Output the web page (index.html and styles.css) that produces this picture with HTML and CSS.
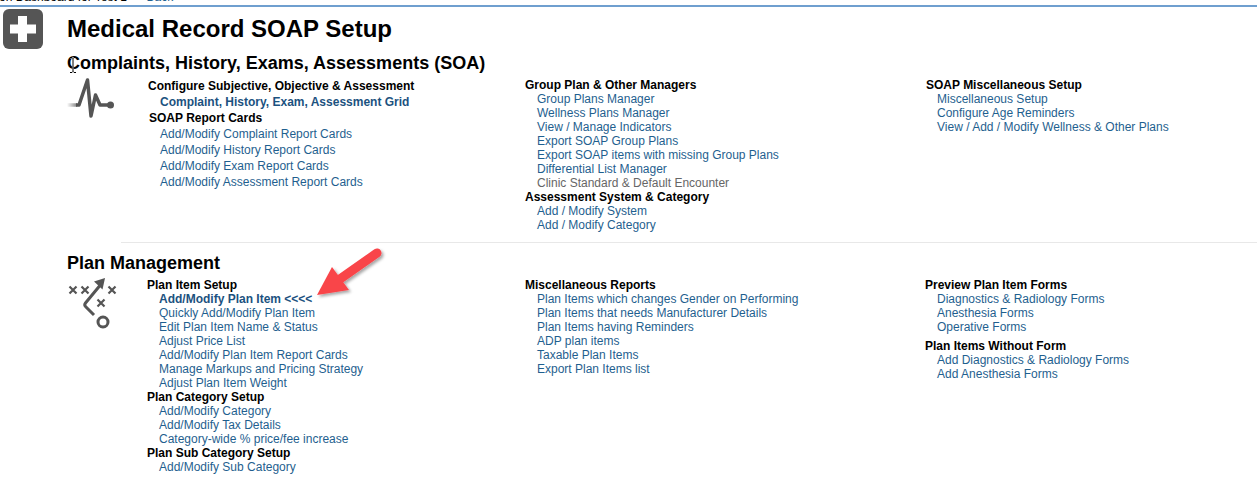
FILE: index.html
```html
<!DOCTYPE html>
<html lang="en">
<head>
<meta charset="utf-8">
<title>Medical Record SOAP Setup</title>
<link rel="stylesheet" href="styles.css">
</head>
<body>
<div class="crumb"><span class="crumb-text">on Dashboard for Test 1 - <a class="back" href="#">Back</a></span></div>
<div class="page">
  <aside class="rail">
    <svg class="add-icon" viewBox="0 0 40 40" width="40" height="40"><rect width="40" height="40" rx="6" fill="#555"/><path d="M15 7h9v8.500h9v9h-9V33h-9v-8.500H7v-9h8z" fill="#fff"/></svg>
  </aside>
  <main class="main">
    <h1 class="title">Medical Record SOAP Setup</h1>
    <section class="section first">
      <h2 class="heading">Complaints, History, Exams, Assessments (SOA)</h2>
      <svg class="cursor" viewBox="0 0 8 16" width="8" height="16"><path d="M1 .5h2l1 1 1-1h2M4 1.500v13M1 15.500h2l1-1 1 1h2" fill="none" stroke="#fff" stroke-width="2.200" stroke-opacity=".7"/><path d="M1 .5h2l1 1 1-1h2M4 1.500v13M1 15.500h2l1-1 1 1h2" fill="none" stroke="#000"/></svg>
      <div class="grid grid-top">
        <svg class="glyph" viewBox="0 0 48 42" width="48" height="42"><defs><linearGradient id="fade" gradientUnits="userSpaceOnUse" x1="0" y1="0" x2="14" y2="0"><stop offset="0" stop-color="#555" stop-opacity="0"/><stop offset="1" stop-color="#555"/></linearGradient></defs><path d="M0 27h10" stroke="url(#fade)" stroke-width="3.500" fill="none"/><path d="M9 27h3l8.500-25 3.500 36 4.500-21 4.500 10h10" fill="none" stroke="#555" stroke-width="3.500" stroke-linejoin="round"/><circle cx="43.500" cy="27" r="3.500" fill="#555"/></svg>
        <div class="col wide">
          <div class="label">Configure Subjective, Objective &amp; Assessment</div>
          <a class="link strong" href="#">Complaint, History, Exam, Assessment Grid</a>
          <div class="label nudge">SOAP Report Cards</div>
          <a class="link" href="#">Add/Modify Complaint Report Cards</a>
          <a class="link" href="#">Add/Modify History Report Cards</a>
          <a class="link" href="#">Add/Modify Exam Report Cards</a>
          <a class="link" href="#">Add/Modify Assessment Report Cards</a>
        </div>
        <div class="col">
          <div class="label">Group Plan &amp; Other Managers</div>
          <a class="link" href="#">Group Plans Manager</a>
          <a class="link" href="#">Wellness Plans Manager</a>
          <a class="link" href="#">View / Manage Indicators</a>
          <a class="link" href="#">Export SOAP Group Plans</a>
          <a class="link" href="#">Export SOAP items with missing Group Plans</a>
          <a class="link" href="#">Differential List Manager</a>
          <a class="link muted" href="#">Clinic Standard &amp; Default Encounter</a>
          <div class="label">Assessment System &amp; Category</div>
          <a class="link" href="#">Add / Modify System</a>
          <a class="link" href="#">Add / Modify Category</a>
        </div>
        <div class="col tight">
          <div class="label">SOAP Miscellaneous Setup</div>
          <a class="link" href="#">Miscellaneous Setup</a>
          <a class="link" href="#">Configure Age Reminders</a>
          <a class="link" href="#">View / Add / Modify Wellness &amp; Other Plans</a>
        </div>
      </div>
    </section>
    <hr class="rule">
    <section class="section second">
      <h2 class="heading">Plan Management</h2>
      <div class="grid grid-bottom">
        <svg class="glyph" viewBox="0 0 50 52" width="50" height="52" fill="none" stroke="#555" stroke-width="2.200"><path d="M2.500 8.500l7 7M9.500 8.500l-7 7M14.500 8.500l7 7M21.500 8.500l-7 7M41.500 8.500l7 7M48.500 8.500l-7 7M30.500 21.500l7 7M37.500 21.500l-7 7"/><path d="M35 5L18.500 25q-1.500 2 0 3.500L27 37" stroke-width="3"/><path d="M38 0l-11 3.500 8.500 8z" fill="#555" stroke="none"/><circle cx="36" cy="44" r="5" stroke-width="3"/></svg>
        <div class="col">
          <div class="label">Plan Item Setup</div>
          <a class="link strong" href="#">Add/Modify Plan Item &lt;&lt;&lt;&lt;</a>
          <a class="link" href="#">Quickly Add/Modify Plan Item</a>
          <a class="link" href="#">Edit Plan Item Name &amp; Status</a>
          <a class="link" href="#">Adjust Price List</a>
          <a class="link" href="#">Add/Modify Plan Item Report Cards</a>
          <a class="link" href="#">Manage Markups and Pricing Strategy</a>
          <a class="link" href="#">Adjust Plan Item Weight</a>
          <div class="label">Plan Category Setup</div>
          <a class="link" href="#">Add/Modify Category</a>
          <a class="link" href="#">Add/Modify Tax Details</a>
          <a class="link" href="#">Category-wide % price/fee increase</a>
          <div class="label">Plan Sub Category Setup</div>
          <a class="link" href="#">Add/Modify Sub Category</a>
        </div>
        <div class="col">
          <div class="label">Miscellaneous Reports</div>
          <a class="link" href="#">Plan Items which changes Gender on Performing</a>
          <a class="link" href="#">Plan Items that needs Manufacturer Details</a>
          <a class="link" href="#">Plan Items having Reminders</a>
          <a class="link" href="#">ADP plan items</a>
          <a class="link" href="#">Taxable Plan Items</a>
          <a class="link" href="#">Export Plan Items list</a>
        </div>
        <div class="col">
          <div class="label">Preview Plan Item Forms</div>
          <a class="link" href="#">Diagnostics &amp; Radiology Forms</a>
          <a class="link" href="#">Anesthesia Forms</a>
          <a class="link" href="#">Operative Forms</a>
          <div class="label gap">Plan Items Without Form</div>
          <a class="link" href="#">Add Diagnostics &amp; Radiology Forms</a>
          <a class="link" href="#">Add Anesthesia Forms</a>
        </div>
      </div>
      <svg class="arrow" viewBox="0 0 80 60" width="80" height="60"><defs><filter id="sh" x="-20%" y="-20%" width="140%" height="140%"><feDropShadow dx="2" dy="2" stdDeviation="1.500" flood-color="#000" flood-opacity=".35"/></filter></defs><g filter="url(#sh)" fill="#f9454a"><path d="M67 8L30 34" stroke="#f9454a" stroke-width="9" stroke-linecap="round"/><path d="M7 50l15-28 17 23z"/></g></svg>
    </section>
  </main>
</div>
</body>
</html>
```
FILE: styles.css
```css
* { box-sizing: border-box; }
html, body { margin: 0; padding: 0; background: #fff; }
body { font-family: "Liberation Sans", Arial, sans-serif; font-size: 12px; color: #000; height: 478px; overflow: hidden; }
a { color: #1f5f8f; text-decoration: none; }
.crumb { height: 7px; border-bottom: 2px solid #6f9fcf; overflow: hidden; }
.crumb-text { display: block; margin: -10px 0 0 -1px; line-height: 14px; white-space: nowrap; }
.back { margin-left: 9px; }
.page { display: flex; }
.rail { width: 67px; flex: none; padding: 2px 0 0 3px; }
.add-icon { display: block; }
.main { flex: 1; min-width: 0; }
.title { margin: 8px 0 0; font-size: 24px; line-height: 28px; font-weight: 700; }
.section { position: relative; }
.first { margin-top: 10px; height: 189px; }
.rule { margin: 0 0 0 54px; height: 1px; border: 0; background: #e8e8e8; }
.second { margin-top: 10px; }
.heading { margin: 0; font-size: 18px; line-height: 20px; font-weight: 700; }
.grid { display: grid; }
.grid-top { margin-top: 5px; grid-template-columns: 80px 378px 401px 1fr; }
.grid-bottom { margin-top: 5px; grid-template-columns: 80px 378px 400px 1fr; }
.glyph { display: block; }
.col { display: flex; flex-direction: column; }
.label { font-weight: 700; line-height: 14px; color: #000; }
.link { line-height: 14px; padding-left: 12px; }
.strong { font-weight: 700; color: #1c5280; }
.muted { color: #666; }
.wide { padding-left: 1px; }
.wide .label, .wide .link { line-height: 16px; }
.tight .link { padding-left: 11px; }
.gap { margin-top: 5px; }
.nudge { padding-left: 1px; }
.cursor { position: absolute; left: 2px; top: 4px; }
.arrow { position: absolute; left: 243px; top: -8px; }
```
